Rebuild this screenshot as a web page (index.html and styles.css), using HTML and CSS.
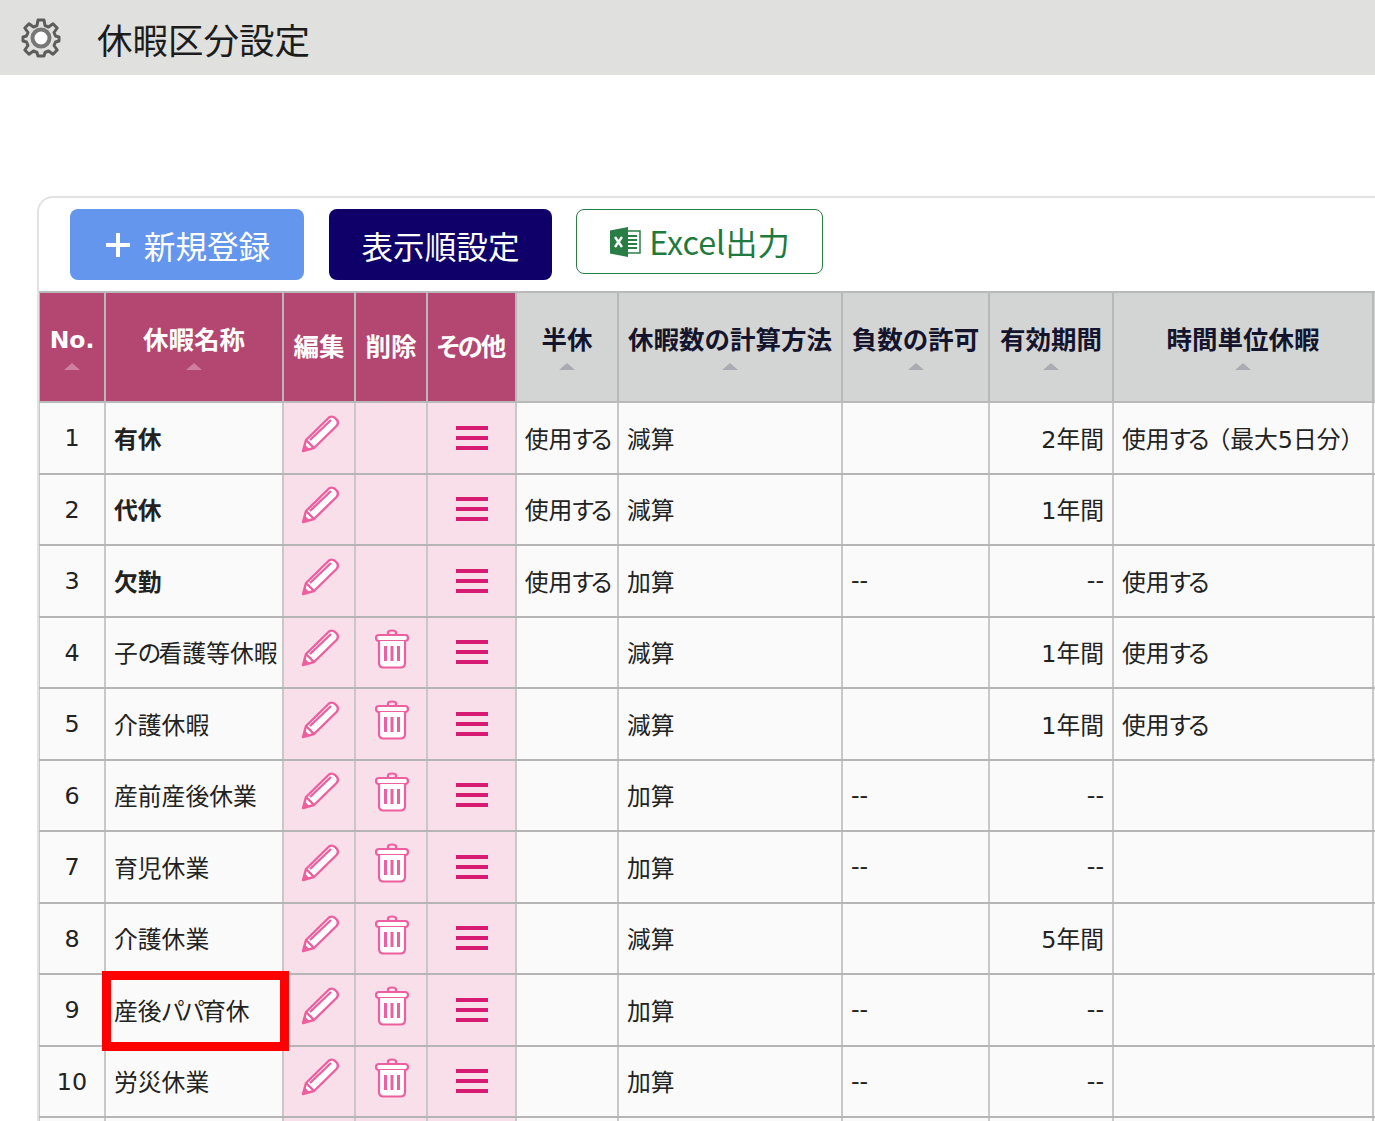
FILE: index.html
```html
<!DOCTYPE html>
<html lang="ja">
<head>
    <meta charset="UTF-8">
    <title>休暇区分設定</title>
    <link rel="stylesheet" href="styles.css">
</head>
<body>
    <svg class="defs" width="0" height="0">
        <symbol id="pencil" viewBox="0 0 40 40">
            <path d="M3 37 L6 26 L29 3.5 Q32 1.5 35 4 L37 6 Q39 9 36.5 12 L14 34 Z" fill="#fff" stroke="#ee5f9f" stroke-width="2.4" stroke-linejoin="round"/>
            <path d="M6 26 L14 34 M10 26 L31 6" fill="none" stroke="#ee5f9f" stroke-width="2.4"/>
            <path d="M3 37 L4.8 30.5 L9.5 35.2 Z" fill="#ee5f9f"/>
        </symbol>
        <symbol id="trash" viewBox="0 0 36 40">
            <path d="M14 6 V3.5 Q14 1.5 18 1.5 Q22 1.5 22 3.5 V6" fill="none" stroke="#ee5f9f" stroke-width="2.2"/>
            <rect x="2" y="6" width="32" height="6" rx="3" fill="#fff" stroke="#ee5f9f" stroke-width="2.2"/>
            <path d="M5 12 V34 Q5 38.5 9.5 38.5 H26.5 Q31 38.5 31 34 V12" fill="#fff" stroke="#ee5f9f" stroke-width="2.2"/>
            <path d="M11.5 17 V32 M18 17 V32 M24.500 17 V32" fill="none" stroke="#ee5f9f" stroke-width="3"/>
        </symbol>
    </svg>

    <header class="page-title">
        <svg class="gear" viewBox="0 0 40 40" width="40" height="40">
            <path d="M17 2 H23 L24 7.500 L27.500 9 L32 5.800 L36.200 10 L33 14.500 L34.500 18 L38 19 V23 L34.500 24 L33 27.500 L36.200 32 L32 36.200 L27.500 33 L24 34.500 L23 38 H17 L16 34.500 L12.500 33 L8 36.200 L3.800 32 L7 27.500 L5.500 24 L2 23 V19 L5.500 18 L7 14.500 L3.800 10 L8 5.800 L12.500 9 L16 7.500 Z" fill="none" stroke="#5d5d5d" stroke-width="3" stroke-linejoin="round"/>
            <circle cx="20" cy="20" r="8.500" fill="#fff" stroke="#777" stroke-width="4"/>
        </svg>
        <h1>休暇区分設定</h1>
    </header>

    <main class="panel">
        <div class="toolbar">
            <button class="btn btn-new"><span class="plus"></span>新規登録</button>
            <button class="btn btn-order">表示順設定</button>
            <button class="btn btn-excel">
                <svg viewBox="0 0 32 32" width="32" height="32">
                    <rect x="14" y="5" width="17" height="22" fill="#fff" stroke="#2b7d46" stroke-width="1.500"/>
                    <path d="M19 10 H28 M19 14 H28 M19 18 H28 M19 22 H28" stroke="#2b7d46" stroke-width="2"/>
                    <path d="M1 4.500 L19 1 V31 L1 27.500 Z" fill="#2b7d46"/>
                    <path d="M6 11 L13 21 M13 11 L6 21" stroke="#fff" stroke-width="2.400"/>
                </svg>
                Excel出力
            </button>
        </div>

        <table class="leave-table">
            <colgroup>
                <col class="c-no"><col class="c-name"><col class="c-edit"><col class="c-del"><col class="c-etc">
                <col class="c-half"><col class="c-calc"><col class="c-neg"><col class="c-term"><col class="c-hour"><col>
            </colgroup>
            <thead>
                <tr>
                    <th class="pink sort th-no">No.</th>
                    <th class="pink sort">休暇名称</th>
                    <th class="pink">編集</th>
                    <th class="pink">削除</th>
                    <th class="pink"><span class="kana">その</span>他</th>
                    <th class="sort">半休</th>
                    <th class="sort">休暇数の計算方法</th>
                    <th class="sort">負数の許可</th>
                    <th class="sort">有効期間</th>
                    <th class="sort">時間単位休暇</th>
                    <th></th>
                </tr>
            </thead>
            <tbody id="rows"></tbody>
        </table>
    </main>

    <script>
        // No, 名称, 標準区分(削除不可), 半休, 計算方法, 負数, 有効期間, 時間単位
        const data = [
            [1, '有休', true, '使用する', '減算', '', '2年間', '使用する（最大5日分）'],
            [2, '代休', true, '使用する', '減算', '', '1年間', ''],
            [3, '欠勤', true, '使用する', '加算', '--', '--', '使用する'],
            [4, '子の看護等休暇', false, '', '減算', '', '1年間', '使用する'],
            [5, '介護休暇', false, '', '減算', '', '1年間', '使用する'],
            [6, '産前産後休業', false, '', '加算', '--', '--', ''],
            [7, '育児休業', false, '', '加算', '--', '--', ''],
            [8, '介護休業', false, '', '減算', '', '5年間', ''],
            [9, '産後パパ育休', false, '', '加算', '--', '--', ''],
            [10, '労災休業', false, '', '加算', '--', '--', '']
        ];

        const rows = document.getElementById('rows');
        const pencil = '<svg class="ico-pencil"><use href="#pencil"/></svg>';
        const trash = '<svg class="ico-trash"><use href="#trash"/></svg>';
        const menu = '<span class="menu"><i></i><i></i><i></i></span>';

        // かなだけ幅を詰める
        function kana(text) {
            return text.replace(/[ぁ-んァ-ヶ]+/g, '<span class="kana">$&</span>');
        }

        let html = '';
        data.forEach(d => {
            const nameClass = d[2] ? 'name fixed' : 'name';
            const mark = d[0] === 9 ? '<span class="mark"></span>' : '';
            html += `<tr>
                <td class="no">${d[0]}</td>
                <td class="${nameClass}">${kana(d[1])}${mark}</td>
                <td class="act">${pencil}</td>
                <td class="act">${d[2] ? '' : trash}</td>
                <td class="act">${menu}</td>
                <td class="half">${kana(d[3])}</td>
                <td>${d[4]}</td>
                <td>${d[5]}</td>
                <td class="right">${d[6]}</td>
                <td>${kana(d[7])}</td>
                <td></td>
            </tr>`;
        });
        html += '<tr><td></td><td></td><td class="act"></td><td class="act"></td><td class="act"></td><td></td><td></td><td></td><td></td><td></td><td></td></tr>';
        rows.innerHTML = html;
    </script>
</body>
</html>
```

FILE: styles.css
```css
html, body {
    height: 1121px;
    overflow: hidden;
}

body {
    margin: 0;
    font-family: "DejaVu Sans", "Noto Sans CJK JP", sans-serif;
    color: #222;
    background-color: #ffffff;
}

.defs {
    position: absolute;
}

.page-title {
    height: 75px;
    display: flex;
    align-items: center;
    padding-left: 21px;
    background-color: #e0e0de;
}

.gear {
    flex: none;
}

.page-title h1 {
    margin: 2px 0 0 36px;
    font-size: 35.5px;
    font-weight: 400;
    color: #1c1c1c;
}

.panel {
    width: 1400px;
    height: 925px;
    margin: 121px 0 0 37px;
    border: 2px solid #e2e2e2;
    border-bottom: none;
    border-right: none;
    border-top-left-radius: 16px;
    overflow: hidden;
}

.toolbar {
    display: flex;
    align-items: flex-start;
    height: 93px;
    box-sizing: border-box;
    padding: 11px 0 0 31px;
}

.btn {
    font-family: "Noto Sans CJK JP", sans-serif;
    font-size: 31.6px;
    line-height: 1;
    border-radius: 8px;
    display: flex;
    align-items: center;
    justify-content: center;
    padding: 3px 0 0;
}

.btn-new {
    width: 234px;
    height: 71px;
    background-color: #6596ee;
    border: none;
    color: #fff;
}

.plus {
    width: 24px;
    height: 24px;
    margin: 0 14px 3px 2px;
    background:
        linear-gradient(#fff, #fff) center / 24px 4px no-repeat,
        linear-gradient(#fff, #fff) center / 4px 24px no-repeat;
}

.btn-order {
    width: 223px;
    height: 71px;
    margin-left: 25px;
    background-color: #0e0068;
    border: none;
    color: #fff;
}

.btn-excel {
    width: 247px;
    height: 65px;
    margin-left: 24px;
    padding: 0;
    background-color: #fff;
    border: 1.5px solid #2b7d46;
    color: #1f7a3d;
    font-size: 32.3px;
    gap: 8px;
}

.leave-table {
    table-layout: fixed;
    border-collapse: collapse;
    width: 1500px;
    margin-left: -1px;
}

.c-no { width: 66px; }
.c-name { width: 178px; }
.c-edit { width: 72px; }
.c-del { width: 72px; }
.c-etc { width: 89px; }
.c-half { width: 102px; }
.c-calc { width: 224px; }
.c-neg { width: 147px; }
.c-term { width: 124px; }
.c-hour { width: 260px; }

th {
    height: 110px;
    box-sizing: border-box;
    padding: 0 0 4px;
    font-family: "Noto Sans CJK JP", sans-serif;
    font-size: 25.5px;
    font-weight: 700;
    color: #14142c;
    background-color: #d3d5d5;
    border: 2px solid #b9b9b9;
    white-space: nowrap;
    text-align: center;
    line-height: 1.3;
}

th.pink {
    background-color: #b44672;
    color: #fff;
}

th.sort {
    padding-bottom: 18px;
    position: relative;
}

th.th-no {
    font-family: "DejaVu Sans", sans-serif;
    font-size: 23.5px;
    padding-bottom: 14px;
}

/* ソート用の三角 */
th.sort::after {
    content: "";
    position: absolute;
    left: 50%;
    bottom: 31px;
    margin-left: -8px;
    border-left: 8px solid transparent;
    border-right: 8px solid transparent;
    border-bottom: 7px solid #a9abb2;
}

th.pink.sort::after {
    border-bottom-color: #cf7f9f;
}

td {
    height: 71.5px;
    box-sizing: border-box;
    padding: 0 8px 1px;
    font-size: 23.8px;
    background-color: #fafafa;
    border: 2px solid #c8c8c8;
    border-top-color: #b5b5b5;
    border-bottom-color: #b5b5b5;
    white-space: nowrap;
}

.kana {
    font-feature-settings: "palt";
    letter-spacing: -3px;
}

th .kana {
    letter-spacing: -2px;
}

td.name .kana {
    letter-spacing: -2.2px;
}

td.no {
    text-align: center;
    padding: 1px 0 0;
}

td.name {
    position: relative;
}

td.fixed {
    font-weight: 700;
}

td.act {
    padding: 0;
    text-align: center;
    background-color: #f9dfe9;
    line-height: 0;
}

td.right {
    text-align: right;
}

td.half {
    text-align: center;
    padding: 0 0 1px;
}

.ico-pencil {
    width: 40px;
    height: 40px;
    margin: -8px 0 0 1px;
}

.ico-trash {
    width: 36px;
    height: 40px;
    margin: -7px 0 0 1px;
}

.menu {
    display: inline-flex;
    flex-direction: column;
    gap: 6px;
    width: 32px;
    vertical-align: middle;
}

.menu i {
    display: block;
    height: 4px;
    background-color: #d81b72;
}

/* 赤枠 */
.mark {
    position: absolute;
    top: -4px;
    bottom: -6px;
    left: -4px;
    right: -7px;
    border: 9px solid #ff0000;
    pointer-events: none;
    z-index: 2;
}
```
